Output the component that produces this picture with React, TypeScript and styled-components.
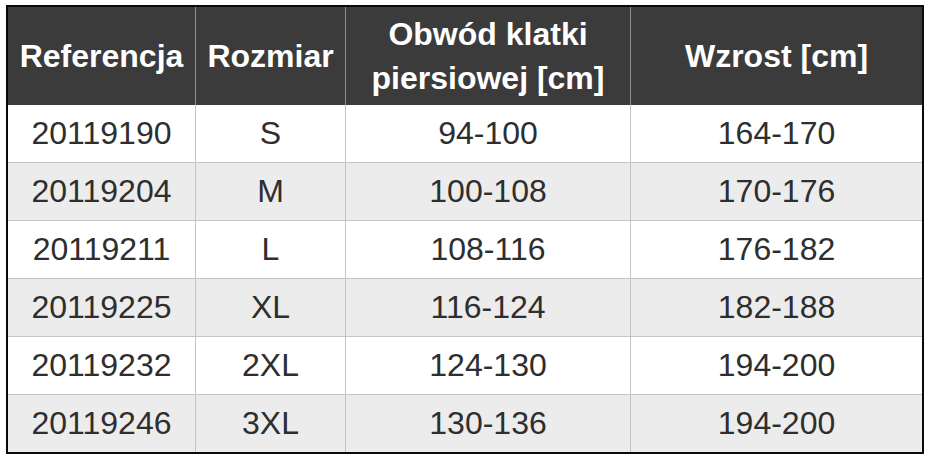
import React from "react";
import styled, { createGlobalStyle } from "styled-components";

const Global = createGlobalStyle`
  html, body { margin: 0; padding: 0; background: #ffffff; }
  body { font-family: "Liberation Sans", Arial, sans-serif; }
`;

const Page = styled.div`
  padding: 5px 0 0 6px;
`;

const Table = styled.table`
  width: 918px;
  table-layout: fixed;
  border-collapse: separate;
  border-spacing: 0;
  border: 2px solid #0a0a0a;
  font-family: "Liberation Sans", Arial, sans-serif;
`;

const HeadCell = styled.th<{ $w: number; $last?: boolean }>`
  box-sizing: border-box;
  width: ${(p) => p.$w}px;
  height: 98px;
  padding: 0 2px;
  background: #3b3b3b;
  color: #ffffff;
  font-size: 32px;
  font-weight: 700;
  line-height: 44px;
  text-align: center;
  vertical-align: middle;
  border-right: ${(p) => (p.$last ? "none" : "1px solid #8e8e8e")};
`;

const Row = styled.tr<{ $alt: boolean }>`
  background: ${(p) => (p.$alt ? "#ececec" : "#ffffff")};
`;

const Cell = styled.td<{ $last?: boolean; $bottom?: boolean }>`
  box-sizing: border-box;
  height: ${(p) => (p.$bottom ? 57 : 58)}px;
  padding: 0;
  color: #2e2e2e;
  font-size: 32px;
  text-align: center;
  vertical-align: middle;
  border-right: ${(p) => (p.$last ? "none" : "1px solid #c4c4c4")};
  border-bottom: ${(p) => (p.$bottom ? "none" : "1px solid #c4c4c4")};
`;

const columns = [
  { label: ["Referencja"], w: 188 },
  { label: ["Rozmiar"], w: 150 },
  { label: ["Obwód klatki", "piersiowej [cm]"], w: 285 },
  { label: ["Wzrost [cm]"], w: 291 },
];

const rows = [
  ["20119190", "S", "94-100", "164-170"],
  ["20119204", "M", "100-108", "170-176"],
  ["20119211", "L", "108-116", "176-182"],
  ["20119225", "XL", "116-124", "182-188"],
  ["20119232", "2XL", "124-130", "194-200"],
  ["20119246", "3XL", "130-136", "194-200"],
];

export default function App() {
  return (
    <Page>
      <Global />
      <Table>
        <thead>
          <tr>
            {columns.map((c, i) => (
              <HeadCell key={i} $w={c.w} $last={i === columns.length - 1}>
                {c.label.map((l, j) => (
                  <React.Fragment key={j}>
                    {j > 0 && <br />}
                    {l}
                  </React.Fragment>
                ))}
              </HeadCell>
            ))}
          </tr>
        </thead>
        <tbody>
          {rows.map((r, i) => (
            <Row key={i} $alt={i % 2 === 1}>
              {r.map((v, j) => (
                <Cell key={j} $last={j === r.length - 1} $bottom={i === rows.length - 1}>
                  {v}
                </Cell>
              ))}
            </Row>
          ))}
        </tbody>
      </Table>
    </Page>
  );
}
